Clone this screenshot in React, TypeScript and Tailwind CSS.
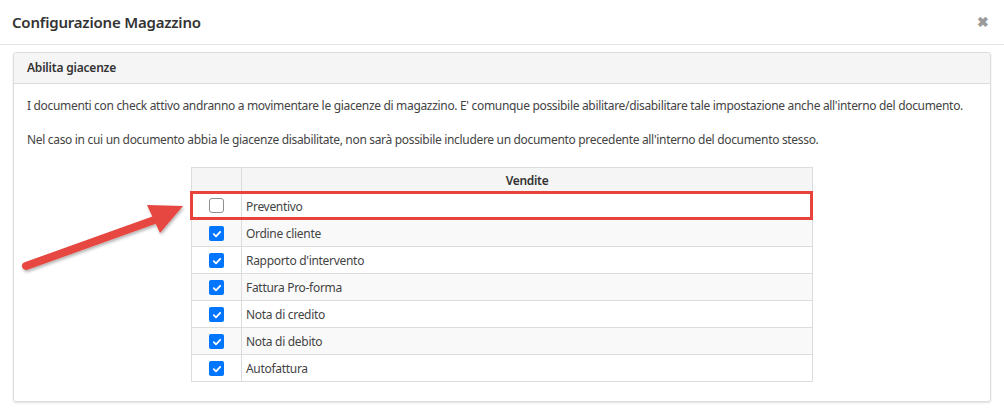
import React from "react";

const rows = [
  { label: "Preventivo", checked: false },
  { label: "Ordine cliente", checked: true },
  { label: "Rapporto d'intervento", checked: true },
  { label: "Fattura Pro-forma", checked: true },
  { label: "Nota di credito", checked: true },
  { label: "Nota di debito", checked: true },
  { label: "Autofattura", checked: true },
];

function Box({ checked }: { checked: boolean }) {
  if (checked) {
    return (
      <span className="inline-flex w-[15px] h-[15px] rounded-[2px] bg-[#0075ff] items-center justify-center">
        <svg width="10" height="10" viewBox="0 0 10 10">
          <path d="M1.8 5.2 L4 7.3 L8.2 2.8" stroke="#fff" strokeWidth="1.8" fill="none" strokeLinecap="round" strokeLinejoin="round" />
        </svg>
      </span>
    );
  }
  return <span className="inline-block w-[15px] h-[15px] rounded-[3px] border border-[#8f8f8f] bg-white" />;
}

export default function App() {
  return (
    <div
      className="relative w-[1004px] h-[410px] bg-white overflow-hidden text-[#333]"
      style={{ fontFamily: '"Segoe UI", "Noto Sans", "Open Sans", sans-serif' }}
    >
      <div className="h-[45px] border-b border-[#e5e5e5] flex items-center justify-between pl-[12px] pr-[15px]">
        <div className="text-[15px] font-semibold text-[#333] tracking-[-0.2px]">Configurazione Magazzino</div>
        <div className="text-[14px] font-bold text-[#9a9a9a] leading-none">✖</div>
      </div>
      <div className="pt-[7px] pl-[13px]">
        <div className="w-[978px] h-[350px] border border-[#dcdcdc] rounded-[3px] shadow-[0_1px_2px_rgba(0,0,0,0.12)]">
          <div className="h-[31px] bg-[#f5f5f5] border-b border-[#dcdcdc] rounded-t-[3px] flex items-center pl-[13px] text-[12px] font-semibold tracking-[-0.2px]">
            Abilita giacenze
          </div>
          <div className="px-[13px] pt-[13px] text-[12px] leading-[17px] tracking-[-0.32px] text-[#444]">
            <p>I documenti con check attivo andranno a movimentare le giacenze di magazzino. E' comunque possibile abilitare/disabilitare tale impostazione anche all'interno del documento.</p>
            <p className="mt-[17px]">Nel caso in cui un documento abbia le giacenze disabilitate, non sarà possibile includere un documento precedente all'interno del documento stesso.</p>
            <div className="relative w-[622px] mx-auto mt-[19px]">
              <table className="w-full border-collapse text-[12px] tracking-[-0.3px]">
                <thead>
                  <tr className="h-[25px] bg-[#f5f5f5]">
                    <th className="w-[50px] border border-[#dcdcdc]"></th>
                    <th className="border border-[#dcdcdc] font-semibold text-[12px] text-[#333]">Vendite</th>
                  </tr>
                </thead>
                <tbody>
                  {rows.map((r, i) => (
                    <tr key={r.label} className={`h-[27px] ${i % 2 === 1 ? "bg-[#f9f9f9]" : "bg-white"}`}>
                      <td className="border border-[#dcdcdc] text-center align-middle">
                        <span className="inline-flex items-center justify-center pt-[3px]">
                          <Box checked={r.checked} />
                        </span>
                      </td>
                      <td className="border border-[#dcdcdc] pl-[4px] text-[#444]">{r.label}</td>
                    </tr>
                  ))}
                </tbody>
              </table>
              <div className="absolute left-[-1px] top-[24px] w-[623px] h-[29px] border-[3px] border-[#e8423d] pointer-events-none" />
            </div>
          </div>
        </div>
      </div>
      <svg className="absolute left-0 top-0 pointer-events-none" width="1004" height="410">
        <defs>
          <filter id="sh" x="-20%" y="-20%" width="140%" height="140%">
            <feDropShadow dx="1" dy="2" stdDeviation="1.5" floodColor="#000" floodOpacity="0.3" />
          </filter>
        </defs>
        <g filter="url(#sh)">
          <line x1="26" y1="266" x2="160" y2="218" stroke="#e6463f" strokeWidth="8" strokeLinecap="round" />
          <polygon points="183,206 147,205 160,233" fill="#e6463f" />
        </g>
      </svg>
    </div>
  );
}
